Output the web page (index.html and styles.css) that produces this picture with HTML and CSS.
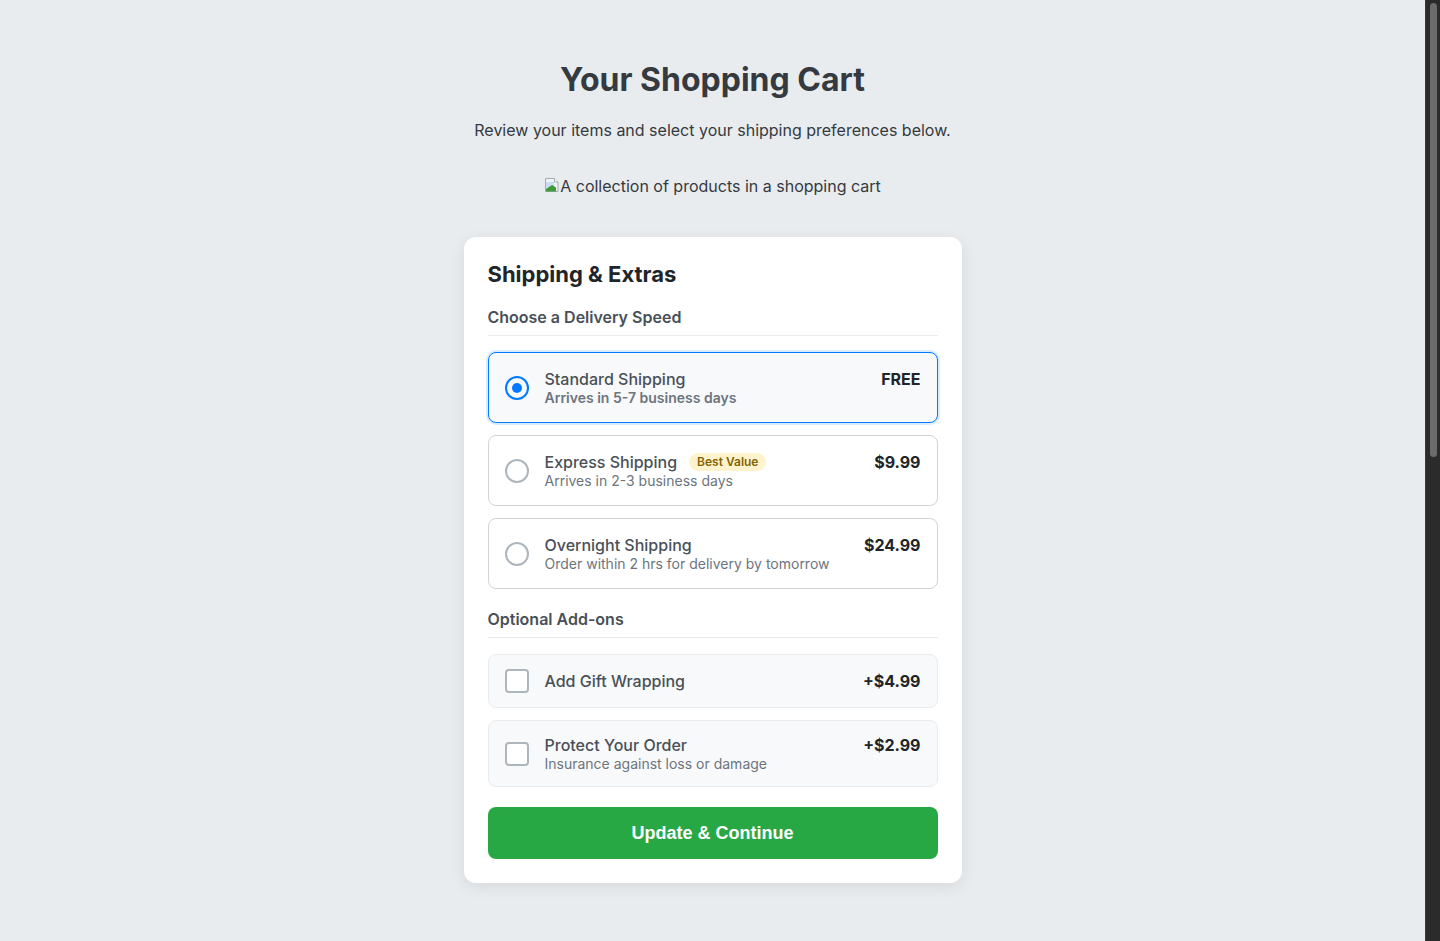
FILE: index.html
```html
<!DOCTYPE html>
<html lang="en">
<head>
<meta charset="utf-8">
<title>Your Shopping Cart</title>
<link rel="stylesheet" href="styles.css">
</head>
<body>
<main class="page">
  <h1 class="title">Your Shopping Cart</h1>
  <p class="subtitle">Review your items and select your shipping preferences below.</p>
  <div class="hero-alt">
    <svg class="broken-icon" width="16" height="16" viewBox="0 0 16 16" aria-hidden="true">
      <path d="M1.5 1.5h9l3.5 3.5v9.5h-12.5z" fill="#eef2f5" stroke="#a3acb5" stroke-width="1"/>
      <path d="M10.5 1.5v3.5h3.5" fill="#fff" stroke="#a3acb5" stroke-width="1"/>
      <path d="M2 5h8v4l-8 3z" fill="#c9def2"/>
      <path d="M2 14.5v-2.5l6-4 4 2.5v4z" fill="#3f9b3a"/>
    </svg><span>A collection of products in a shopping cart</span>
  </div>

  <section class="card">
    <h2 class="card-title">Shipping &amp; Extras</h2>

    <h3 class="section-label">Choose a Delivery Speed</h3>
    <div class="options">
      <label class="option selected">
        <span class="radio checked"></span>
        <span class="option-body">
          <span class="option-title">Standard Shipping</span>
          <span class="option-desc strong">Arrives in 5-7 business days</span>
        </span>
        <span class="price">FREE</span>
      </label>
      <label class="option">
        <span class="radio"></span>
        <span class="option-body">
          <span class="option-title">Express Shipping <span class="badge">Best Value</span></span>
          <span class="option-desc">Arrives in 2-3 business days</span>
        </span>
        <span class="price">$9.99</span>
      </label>
      <label class="option">
        <span class="radio"></span>
        <span class="option-body">
          <span class="option-title">Overnight Shipping</span>
          <span class="option-desc">Order within 2 hrs for delivery by tomorrow</span>
        </span>
        <span class="price">$24.99</span>
      </label>
    </div>

    <h3 class="section-label addons-label">Optional Add-ons</h3>
    <div class="options">
      <label class="addon single">
        <span class="checkbox"></span>
        <span class="option-body">
          <span class="option-title">Add Gift Wrapping</span>
        </span>
        <span class="price">+$4.99</span>
      </label>
      <label class="addon">
        <span class="checkbox"></span>
        <span class="option-body">
          <span class="option-title">Protect Your Order</span>
          <span class="option-desc">Insurance against loss or damage</span>
        </span>
        <span class="price">+$2.99</span>
      </label>
    </div>

    <button class="cta" type="button">Update &amp; Continue</button>
  </section>
</main>
<div class="fake-scrollbar" aria-hidden="true"><div class="fake-thumb"></div></div>
</body>
</html>
```

FILE: styles.css
```css
html {
  background: #e9ecef;
}
body {
  margin: 0;
  padding-right: 15px;
  font-family: Inter, "Noto Sans", sans-serif;
  color: #343a40;
  background: #e9ecef;
}
.page {
  padding: 60px 20px 50px;
  display: flex;
  flex-direction: column;
  align-items: center;
}
.title {
  margin: 0 0 21px;
  font-size: 32px;
  font-weight: 700;
  line-height: 39px;
  color: #343a40;
}
.subtitle {
  margin: 0;
  font-size: 16px;
  line-height: 20px;
  color: #343a40;
}
.hero-alt {
  margin-top: 36px;
  display: flex;
  align-items: center;
  font-size: 16px;
  line-height: 20px;
  color: #343a40;
}
.broken-icon {
  display: block;
  margin-top: -2px;
}
.card {
  margin-top: 41px;
  width: 498px;
  box-sizing: border-box;
  padding: 24px;
  background: #fff;
  border-radius: 12px;
  box-shadow: 0 4px 16px rgba(0, 0, 0, 0.08);
}
.card-title {
  margin: 0;
  font-size: 22px;
  line-height: 27px;
  font-weight: 700;
  color: #212529;
}
.section-label {
  margin: 19px 0 16px;
  padding-bottom: 8px;
  border-bottom: 1px solid #e9ecef;
  font-size: 16px;
  line-height: normal;
  font-weight: 600;
  color: #495057;
}
.addons-label {
  margin-top: 20px;
}
.options {
  display: flex;
  flex-direction: column;
  gap: 12px;
}
.option,
.addon {
  display: flex;
  align-items: center;
  gap: 16px;
  padding: 16px;
  border: 1px solid #ced4da;
  border-radius: 8px;
  background: #fff;
}
.option.selected {
  border-color: #007bff;
  background: #f8f9fa;
  box-shadow: 0 0 0 2px rgba(0, 123, 255, 0.15);
}
.addon {
  padding: 14px 16px;
  background: #f8f9fa;
  border-color: #e9ecef;
}
.radio {
  flex: none;
  width: 24px;
  height: 24px;
  box-sizing: border-box;
  border: 2px solid #adb5bd;
  border-radius: 50%;
  display: flex;
  align-items: center;
  justify-content: center;
}
.radio.checked {
  border-color: #007bff;
}
.radio.checked::after {
  content: "";
  width: 10px;
  height: 10px;
  border-radius: 50%;
  background: #007bff;
}
.checkbox {
  flex: none;
  width: 24px;
  height: 24px;
  box-sizing: border-box;
  border: 2px solid #adb5bd;
  border-radius: 4px;
  background: #fff;
}
.option-body {
  flex: 1;
  display: flex;
  flex-direction: column;
}
.option-title {
  display: flex;
  align-items: center;
  gap: 12px;
  font-size: 16px;
  line-height: normal;
  font-weight: 500;
  color: #495057;
}
.option-desc {
  font-size: 14px;
  line-height: normal;
  color: #6c757d;
}
.option-desc.strong {
  font-weight: 600;
}
.badge {
  display: inline-block;
  padding: 2px 8px;
  border-radius: 10px;
  background: #fff3cd;
  color: #856404;
  font-size: 12px;
  line-height: 14px;
  font-weight: 600;
}
.price {
  align-self: flex-start;
  font-size: 16px;
  line-height: normal;
  font-weight: 700;
  color: #212529;
}
.addon.single .price {
  align-self: center;
}
.cta {
  display: block;
  width: 100%;
  margin-top: 20px;
  height: 52px;
  border: 0;
  border-radius: 8px;
  background: #28a745;
  color: #fff;
  font-family: "Liberation Sans", Arial, sans-serif;
  font-size: 18px;
  font-weight: 700;
  cursor: pointer;
}
.fake-scrollbar {
  position: fixed;
  top: 0;
  right: 0;
  width: 15px;
  height: 100vh;
  box-sizing: border-box;
  padding: 3px 3px 0 4px;
  background: #2b2b2b;
  border-left: 1px solid #3a3a3a;
}
.fake-thumb {
  height: 454px;
  border-radius: 4px;
  background: #6b6b6b;
}
```
